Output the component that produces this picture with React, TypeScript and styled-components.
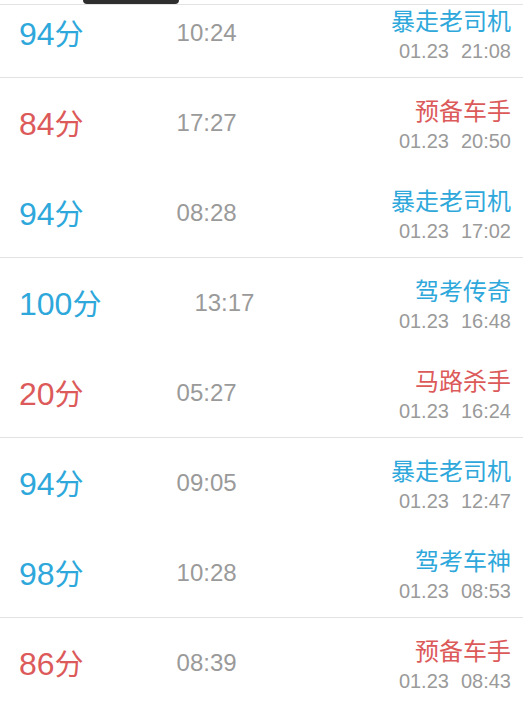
import styled, { createGlobalStyle } from "styled-components";

const GlobalStyle = createGlobalStyle`
  html, body {
    margin: 0;
    padding: 0;
    background: #ffffff;
  }
  body {
    font-family: "Liberation Sans", "Noto Sans CJK SC", sans-serif;
  }
`;

const Page = styled.div`
  width: 523px;
  height: 720px;
  overflow: hidden;
  background: #ffffff;
  display: flex;
  flex-direction: column;
`;

const TopBar = styled.div`
  height: 4px;
  flex-shrink: 0;
  border-bottom: 1px solid #e3e3e3;
  display: flex;
`;

const Notch = styled.div`
  margin-left: 83px;
  width: 96px;
  height: 4px;
  background: #2e2e2e;
  border-radius: 0 0 6px 6px;
`;

const List = styled.div`
  flex: 1;
  display: flex;
  flex-direction: column;
`;

// first row is partly scrolled out of view
const Row = styled.div<{ $divider: boolean; $cropped?: boolean }>`
  height: ${(p) => (p.$cropped ? "73px" : "90px")};
  padding: ${(p) => (p.$cropped ? "0 12px 17px 19px" : "0 12px 0 19px")};
  box-sizing: border-box;
  flex-shrink: 0;
  display: flex;
  align-items: center;
  border-bottom: 1px solid ${(p) => (p.$divider ? "#e2e2e2" : "transparent")};
`;

const Score = styled.div<{ $good: boolean }>`
  font-size: 32px;
  line-height: 40px;
  color: ${(p) => (p.$good ? "#2ea8db" : "#dc5a5a")};
`;

const Unit = styled.span`
  font-size: 29px;
  font-family: "Noto Sans CJK SC", sans-serif;
`;

const Duration = styled.div`
  margin-left: 93px;
  font-size: 24px;
  line-height: 30px;
  color: #9a9a9a;
`;

const Side = styled.div`
  margin-left: auto;
  margin-top: 4px;
  display: flex;
  flex-direction: column;
  align-items: flex-end;
  gap: 4px;
`;

const Title = styled.div<{ $good: boolean }>`
  font-family: "Noto Sans CJK SC", sans-serif;
  font-size: 24px;
  line-height: 28px;
  color: ${(p) => (p.$good ? "#2ea8db" : "#dc5a5a")};
`;

const Stamp = styled.div`
  display: flex;
  gap: 12px;
  font-size: 20px;
  line-height: 26px;
  color: #9a9a9a;
`;

type Record = {
  score: number;
  time: string;
  title: string;
  date: string;
  clock: string;
};

const records: Record[] = [
  { score: 94, time: "10:24", title: "暴走老司机", date: "01.23", clock: "21:08" },
  { score: 84, time: "17:27", title: "预备车手", date: "01.23", clock: "20:50" },
  { score: 94, time: "08:28", title: "暴走老司机", date: "01.23", clock: "17:02" },
  { score: 100, time: "13:17", title: "驾考传奇", date: "01.23", clock: "16:48" },
  { score: 20, time: "05:27", title: "马路杀手", date: "01.23", clock: "16:24" },
  { score: 94, time: "09:05", title: "暴走老司机", date: "01.23", clock: "12:47" },
  { score: 98, time: "10:28", title: "驾考车神", date: "01.23", clock: "08:53" },
  { score: 86, time: "08:39", title: "预备车手", date: "01.23", clock: "08:43" },
];

const App = () => {
  return (
    <>
      <GlobalStyle />
      <Page>
        <TopBar>
          <Notch />
        </TopBar>
        <List>
          {records.map((r, i) => {
            const good = r.score >= 90;
            return (
              <Row key={i} $divider={i % 2 === 0} $cropped={i === 0}>
                <Score $good={good}>
                  {r.score}
                  <Unit>分</Unit>
                </Score>
                <Duration>{r.time}</Duration>
                <Side>
                  <Title $good={good}>{r.title}</Title>
                  <Stamp>
                    <span>{r.date}</span>
                    <span>{r.clock}</span>
                  </Stamp>
                </Side>
              </Row>
            );
          })}
        </List>
      </Page>
    </>
  );
};

export default App;
